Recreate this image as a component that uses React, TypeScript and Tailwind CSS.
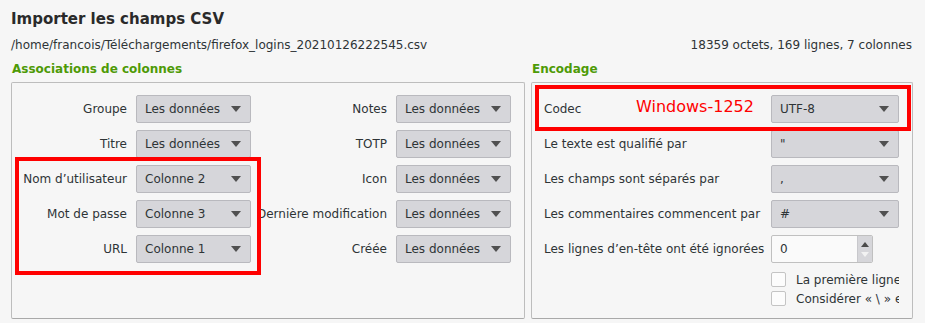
import React from "react";

function Tri() {
  return (
    <svg width="10" height="6" viewBox="0 0 10 6" className="shrink-0">
      <polygon points="0,0 10,0 5,6" fill="#505050" />
    </svg>
  );
}

function Select({ value, w }: { value: string; w: string }) {
  return (
    <div
      className={`${w} h-[28px] flex items-center justify-between pl-[8px] pr-[9px] bg-[#d6d6da] border border-[#b9b9be] rounded-[2px] whitespace-nowrap`}
    >
      <span>{value}</span>
      <Tri />
    </div>
  );
}

const leftRows: [string, string, string][] = [
  ["Groupe", "Les données", "Notes"],
  ["Titre", "Les données", "TOTP"],
  ["Nom d\u2019utilisateur", "Colonne 2", "Icon"],
  ["Mot de passe", "Colonne 3", "Dernière modification"],
  ["URL", "Colonne 1", "Créée"],
];

const rightRows: [string, string][] = [
  ["Codec", "UTF-8"],
  ["Le texte est qualifié par", '"'],
  ["Les champs sont séparés par", ","],
  ["Les commentaires commencent par", "#"],
];

export default function App() {
  return (
    <div className="w-[925px] h-[323px] overflow-hidden bg-[#f6f6f6] text-[#2e3436] font-['DejaVu_Sans',sans-serif] text-[12px] leading-[16px]">
      <div className="pl-[11px] pt-[10px] text-[15px] leading-[18px] font-bold text-[#2a2a2a]">
        Importer les champs CSV
      </div>
      <div className="mt-[9px] flex justify-between pl-[11px] pr-[13px]">
        <span>/home/francois/Téléchargements/firefox_logins_20210126222545.csv</span>
        <span>18359 octets, 169 lignes, 7 colonnes</span>
      </div>
      <div className="mt-[8px] flex gap-[6px] pl-[11px]">
        <div className="w-[514px] flex flex-col">
          <div className="pl-[1px] font-bold text-[#4e9a06]">Associations de colonnes</div>
          <div className="relative mt-[5px] h-[237px] border border-[#bdbdbd] border-b-[#a9a9a9] rounded-[2px]">
            <div className="grid grid-cols-[124px_115px_145px_115px] gap-y-[7px] pt-[12px]">
              {leftRows.map(([l1, v1, l2]) => (
                <React.Fragment key={l1}>
                  <div className="flex items-center justify-end pr-[9px] whitespace-nowrap">{l1}</div>
                  <Select value={v1} w="w-[115px]" />
                  <div className="flex items-center justify-end pr-[9px] whitespace-nowrap">{l2}</div>
                  <Select value="Les données" w="w-[115px]" />
                </React.Fragment>
              ))}
            </div>
            <div className="absolute left-[3px] top-[74px] w-[246px] h-[118px] border-[4px] border-[#ff0000]" />
          </div>
        </div>
        <div className="w-[382px] flex flex-col">
          <div className="pl-[1px] font-bold text-[#4e9a06]">Encodage</div>
          <div className="relative mt-[5px] h-[237px] border border-[#bdbdbd] border-b-[#a9a9a9] rounded-[2px]">
            <div className="grid grid-cols-[227px_128px] gap-y-[7px] pt-[12px] pl-[12px]">
              {rightRows.map(([l, v]) => (
                <React.Fragment key={l}>
                  <div className="flex items-center whitespace-nowrap">{l}</div>
                  <Select value={v} w="w-[128px]" />
                </React.Fragment>
              ))}
              <div className="flex items-center whitespace-nowrap">Les lignes d’en-tête ont été ignorées</div>
              <div className="w-[102px] h-[28px] flex border border-[#c0c0c0] rounded-[2px] bg-[#fafafa] overflow-hidden">
                <div className="flex-1 flex items-center pl-[8px]">0</div>
                <div className="w-[15px] bg-[#d6d6da] border-l border-[#c8c8cc] flex flex-col items-center justify-center gap-[5px]">
                  <svg width="8" height="5" viewBox="0 0 8 5">
                    <polygon points="0,5 8,5 4,0" fill="#4a4a4a" />
                  </svg>
                  <svg width="8" height="5" viewBox="0 0 8 5">
                    <polygon points="0,0 8,0 4,5" fill="#f2f2f2" />
                  </svg>
                </div>
              </div>
              <div />
              <div className="w-[128px] overflow-hidden flex flex-col">
                {["La première ligne contient les noms des champs", "Considérer « \\ » en tant que caractère d’échappement"].map((t) => (
                  <div key={t} className="h-[19px] flex items-center gap-[10px] whitespace-nowrap">
                    <div className="w-[15px] h-[15px] shrink-0 bg-[#fcfcfc] border border-[#c4c4c4] rounded-[2px]" />
                    <span>{t}</span>
                  </div>
                ))}
              </div>
            </div>
            <div className="absolute left-[3px] top-[2px] w-[376px] h-[46px] border-[4px] border-[#ff0000]">
              <span className="absolute left-[97px] top-[8px] text-[16px] leading-[20px] text-[#ff0000] whitespace-nowrap">
                Windows-1252
              </span>
            </div>
          </div>
        </div>
      </div>
    </div>
  );
}
